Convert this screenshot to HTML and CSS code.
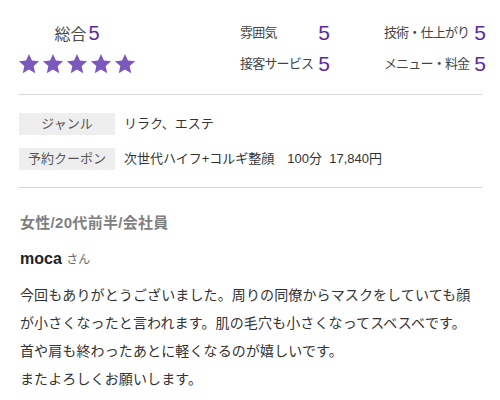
FILE: index.html
```html
<!DOCTYPE html>
<html lang="ja">
<head>
    <meta charset="UTF-8">
    <meta name="viewport" content="width=device-width, initial-scale=1.0">
    <title>口コミ</title>
    <link rel="stylesheet" href="styles.css">
</head>
<body>
    <div class="review">
        <!-- Ratings -->
        <div class="summary">
            <div class="total">
                <div class="total-title">総合<span class="num">5</span></div>
                <div class="stars">
                    <svg viewBox="0 0 24 24"><polygon points="12,1 15.2,8.2 23,9 17.1,14.3 18.8,22 12,18 5.2,22 6.9,14.3 1,9 8.8,8.2"/></svg>
                    <svg viewBox="0 0 24 24"><polygon points="12,1 15.2,8.2 23,9 17.1,14.3 18.8,22 12,18 5.2,22 6.9,14.3 1,9 8.8,8.2"/></svg>
                    <svg viewBox="0 0 24 24"><polygon points="12,1 15.2,8.2 23,9 17.1,14.3 18.8,22 12,18 5.2,22 6.9,14.3 1,9 8.8,8.2"/></svg>
                    <svg viewBox="0 0 24 24"><polygon points="12,1 15.2,8.2 23,9 17.1,14.3 18.8,22 12,18 5.2,22 6.9,14.3 1,9 8.8,8.2"/></svg>
                    <svg viewBox="0 0 24 24"><polygon points="12,1 15.2,8.2 23,9 17.1,14.3 18.8,22 12,18 5.2,22 6.9,14.3 1,9 8.8,8.2"/></svg>
                </div>
            </div>

            <div class="scores">
                <span class="label">雰囲気</span><span class="num">5</span>
                <span class="label second">技術・仕上がり</span><span class="num">5</span>
                <span class="label">接客サービス</span><span class="num">5</span>
                <span class="label second">メニュー・料金</span><span class="num">5</span>
            </div>
        </div>

        <!-- Menu used -->
        <div class="menu">
            <div class="menu-label">ジャンル</div>
            <div class="menu-value">リラク、エステ</div>
            <div class="menu-label">予約クーポン</div>
            <div class="menu-value">次世代ハイフ+コルギ整顔　100分&nbsp;&nbsp;17,840円</div>
        </div>

        <!-- Comment -->
        <div class="comment">
            <div class="profile">女性/20代前半/会社員</div>
            <div class="name">moca <span>さん</span></div>
            <p>今回もありがとうございました。周りの同僚からマスクをしていても顔が小さくなったと言われます。肌の毛穴も小さくなってスベスベです。<br>首や肩も終わったあとに軽くなるのが嬉しいです。<br>またよろしくお願いします。</p>
        </div>
    </div>
</body>
</html>
```

FILE: styles.css
```css
* {
    margin: 0;
    padding: 0;
    box-sizing: border-box;
}

body {
    font-family: 'Liberation Sans', 'Noto Sans CJK JP', sans-serif;
    background-color: #fff;
    color: #333;
}

.review {
    padding: 0 18px;
}

/* Ratings */
.summary {
    display: flex;
    align-items: flex-start;
    padding: 22px 0 19px;
    border-bottom: 1px solid #d8d8d8;
}

.total {
    width: 118px;
    text-align: center;
}

.total-title {
    font-size: 16px;
    line-height: 22px;
    color: #4a4a4a;
}

.num {
    color: #5a2a9e;
    font-size: 20px;
    margin-left: 2px;
}

.stars {
    display: flex;
    justify-content: center;
    gap: 2px;
    margin-top: 7px;
}

.stars svg {
    width: 22px;
    height: 22px;
    fill: #7b58bd;
}

.scores {
    display: grid;
    grid-template-columns: max-content max-content max-content max-content;
    column-gap: 5px;
    row-gap: 9px;
    margin-left: 104px;
    font-size: 13px;
    line-height: 22px;
    color: #444;
}

.scores .label {
    letter-spacing: -0.8px;
}

.scores .num {
    margin-left: 0;
    font-size: 21px;
}

.scores .second {
    margin-left: 49px;
}

/* Menu used */
.menu {
    display: grid;
    grid-template-columns: 96px 1fr;
    column-gap: 9px;
    row-gap: 13px;
    padding: 18px 0 17px 1px;
    border-bottom: 1px solid #d8d8d8;
    font-size: 13px;
    line-height: 22px;
}

.menu-label {
    background-color: #eeeeee;
    text-align: center;
    color: #555;
}

.menu-value {
    color: #333;
}

/* Comment */
.comment {
    padding: 24px 0 0 2px;
}

.profile {
    font-size: 15px;
    line-height: 22px;
    font-weight: bold;
    color: #808080;
    letter-spacing: 0.3px;
}

.name {
    margin-top: 14px;
    font-size: 16px;
    line-height: 22px;
    font-weight: bold;
    color: #222;
}

.name span {
    font-size: 12px;
    font-weight: normal;
    color: #666;
}

.comment p {
    width: 456px;
    margin-top: 10px;
    font-size: 14px;
    letter-spacing: 0.12px;
    line-height: 28px;
    color: #333;
}
```
